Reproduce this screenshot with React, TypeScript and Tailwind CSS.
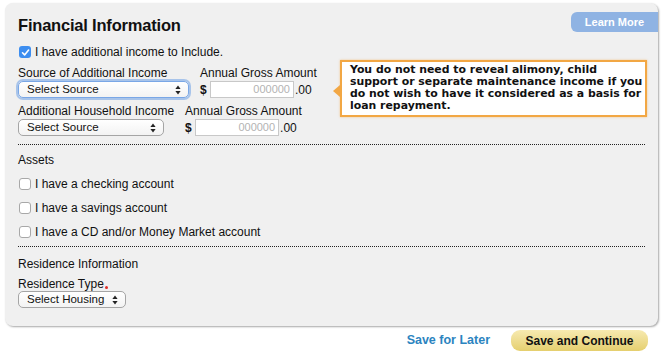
import React from "react";

function Arrows() {
  return (
    <svg width="6" height="10" viewBox="0 0 6 10" className="shrink-0">
      <path d="M3 0.5 L5.6 4 L0.4 4 Z" fill="#222" />
      <path d="M3 9.5 L5.6 6 L0.4 6 Z" fill="#222" />
    </svg>
  );
}

function Select({ label, width, focused }: { label: string; width: string; focused?: boolean }) {
  return (
    <div
      className={`${width} h-[17px] flex items-center justify-between pl-[8px] pr-[7px] rounded-[5px] bg-gradient-to-b from-white to-[#f3f3f3] text-[11.5px] leading-none text-[#111] ${
        focused
          ? "border border-[#7aa7e6] shadow-[0_0_0_2px_rgba(110,160,230,0.55)]"
          : "border border-[#a5a5a5]"
      }`}
    >
      <span>{label}</span>
      <Arrows />
    </div>
  );
}

function Amount() {
  return (
    <div className="flex items-center h-[17px]">
      <span className="font-bold text-[12px] w-[10px]">$</span>
      <div className="w-[84px] h-[17px] bg-white border border-[#c8c8c8] flex items-center justify-end pr-[3px] text-[11px] text-[#b3b3b3]">
        000000
      </div>
      <span className="text-[12px] ml-[1px]">.00</span>
    </div>
  );
}

function Checkbox({ checked }: { checked?: boolean }) {
  if (checked) {
    return (
      <div className="w-[12px] h-[12px] rounded-[3px] bg-[#3d8ef0] flex items-center justify-center shrink-0">
        <svg width="9" height="9" viewBox="0 0 9 9">
          <path d="M1.5 4.8 L3.6 6.9 L7.6 2" stroke="white" strokeWidth="1.6" fill="none" strokeLinecap="round" strokeLinejoin="round" />
        </svg>
      </div>
    );
  }
  return <div className="w-[12px] h-[12px] rounded-[3px] bg-white border border-[#a8a8a8] shrink-0" />;
}

function CheckRow({ text, checked, className }: { text: string; checked?: boolean; className?: string }) {
  return (
    <div className={`flex items-center h-[16px] pl-[1px] gap-[4px] text-[12px] ${className ?? ""}`}>
      <Checkbox checked={checked} />
      <span>{text}</span>
    </div>
  );
}

function Dotted({ className }: { className?: string }) {
  return <div className={`h-0 border-t border-dotted border-[#222] ${className ?? ""}`} />;
}

export default function App() {
  return (
    <div
      className="w-[663px] h-[357px] bg-white overflow-hidden text-[#111]"
      style={{ fontFamily: '"Liberation Sans", Arial, sans-serif' }}
    >
      <div className="relative ml-[5px] mt-[3px] w-[653px] h-[323px] rounded-[8px] bg-[#f0f0f0] shadow-[1px_1px_2px_rgba(0,0,0,0.35)] pl-[13px] pr-[13px] pt-[9px] flex flex-col">
        <div className="flex items-start justify-between h-[20px]">
          <h1 className="text-[16.5px] font-bold leading-[20px] mt-[3px] tracking-[-0.2px]">Financial Information</h1>
          <div className="-mr-[13px] w-[87px] h-[20px] rounded-l-[6px] bg-[#8fb3e3] text-white font-bold text-[11px] flex items-center justify-center">
            Learn More
          </div>
        </div>

        <CheckRow text="I have additional income to Include." checked className="mt-[12px]" />

        <div className="flex gap-[11px] mt-[6px] text-[12px]">
          <div className="flex flex-col">
            <span className="leading-[14px]">Source of Additional Income</span>
            <div className="mt-[1px]">
              <Select label="Select Source" width="w-[171px]" focused />
            </div>
          </div>
          <div className="flex flex-col">
            <span className="leading-[14px]">Annual Gross Amount</span>
            <div className="mt-[1px]">
              <Amount />
            </div>
          </div>
        </div>

        <div className="flex gap-[11px] mt-[6px] text-[12px]">
          <div className="flex flex-col">
            <span className="leading-[14px]">Additional Household Income</span>
            <div className="mt-[1px]">
              <Select label="Select Source" width="w-[146px]" />
            </div>
          </div>
          <div className="flex flex-col">
            <span className="leading-[14px]">Annual Gross Amount</span>
            <div className="mt-[1px]">
              <Amount />
            </div>
          </div>
        </div>

        <Dotted className="mt-[8px]" />

        <div className="mt-[8px] text-[12px] leading-[14px]">Assets</div>
        <CheckRow text="I have a checking account" className="mt-[9px]" />
        <CheckRow text="I have a savings account" className="mt-[8px]" />
        <CheckRow text="I have a CD and/or Money Market account" className="mt-[8px]" />

        <Dotted className="mt-[6px]" />

        <div className="mt-[10px] text-[12px] leading-[14px]">Residence Information</div>
        <div className="mt-[6px] text-[12px] leading-[14px] flex items-end">
          Residence Type
          <span className="ml-[1px] mb-[2px] w-[3px] h-[3px] rounded-full bg-[#e0302a]" />
        </div>
        <div>
          <Select label="Select Housing" width="w-[108px]" />
        </div>

        <div
          className="absolute left-[335px] top-[57px] w-[307px] h-[57px] bg-white border-2 border-[#f2a744] pl-[8px] pr-0 pt-[2px] text-[10.9px] font-bold leading-[12px] text-[#111] whitespace-nowrap shadow-[0_0_2px_rgba(242,167,68,0.6)]"
          style={{ fontFamily: '"DejaVu Sans", Verdana, sans-serif' }}
        >
          <div className="absolute -left-[9px] top-[23px] w-0 h-0 border-y-[6px] border-y-transparent border-r-[7px] border-r-[#f2a744]" />
          You do not need to reveal alimony, child
          <br />
          support or separate maintenance income if you
          <br />
          do not wish to have it considered as a basis for
          <br />
          loan repayment.
        </div>
      </div>

      <div className="flex items-center justify-end pr-[15px] mt-[4px]">
        <span className="text-[12.5px] font-bold text-[#2b84c0] mr-[21px]">Save for Later</span>
        <div className="w-[137px] h-[21px] rounded-[9px] bg-gradient-to-b from-[#f7eab0] to-[#e5cf6e] flex items-center justify-center text-[12px] font-bold text-[#111]">
          Save and Continue
        </div>
      </div>
    </div>
  );
}
